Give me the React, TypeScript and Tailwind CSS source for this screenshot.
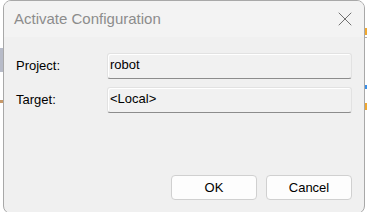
import { X } from 'lucide-react';

const font = { fontFamily: '"Liberation Sans", Arial, sans-serif' };

function Field({ label, value }: { label: string; value: string }) {
  return (
    <div className="flex items-center">
      <span className="w-[91px] shrink-0 text-[13px] text-black">{label}</span>
      <div className="flex h-[26px] w-[245px] items-center rounded-[3px] border border-[#e2e2e2] border-b-[#8c8c8c] bg-[#f1f1f1] pl-[2px] pb-[3px] text-[13px] text-black shadow-[inset_1px_1px_0_#ffffff]">
        {value}
      </div>
    </div>
  );
}

function DialogButton({ children }: { children: string }) {
  return (
    <button
      type="button"
      className="h-[25px] w-[86px] rounded-[4px] border border-[#d0d0d0] bg-[#fdfdfd] text-[13px] text-black"
    >
      {children}
    </button>
  );
}

export default function App() {
  return (
    <div className="relative h-[212px] w-[367px] overflow-hidden bg-white" style={font}>
      {/* bits of the window behind the dialog */}
      <span className="absolute left-0 top-[48px] h-[24px] w-[3px] bg-[#b7bbc8]" />
      <span className="absolute left-0 top-[100px] h-[3px] w-[3px] bg-[#c89a6a]" />
      <span className="absolute right-0 top-[28px] h-[7px] w-[2px] bg-[#f0a830]" />
      <span className="absolute right-0 top-[37px] h-px w-[2px] bg-[#b0b0b0]" />
      <span className="absolute right-0 top-[85px] h-[4px] w-[2px] bg-[#3a8ee6]" />
      <span className="absolute right-0 top-[103px] h-[7px] w-[2px] bg-[#f0a830]" />

      <div className="ml-[3px] flex h-[214px] w-[362px] flex-col overflow-hidden rounded-[8px] border border-[#a8a8a8] bg-[#f0f0f0]">
        <div className="flex h-[36px] shrink-0 items-center justify-between bg-[#f3f3f3] pl-[10px] pr-[7px]">
          <span className="text-[15px] text-[#8c8c8c]">Activate Configuration</span>
          <X size={24} strokeWidth={1} className="text-[#707070]" />
        </div>
        <div className="flex flex-1 flex-col pl-[12px] pt-[16px]">
          <div className="flex flex-col gap-[8px]">
            <Field label="Project:" value="robot" />
            <Field label="Target:" value="<Local>" />
          </div>
          <div className="mt-[62px] flex gap-[9px] pl-[155px]">
            <DialogButton>OK</DialogButton>
            <DialogButton>Cancel</DialogButton>
          </div>
        </div>
      </div>
    </div>
  );
}
